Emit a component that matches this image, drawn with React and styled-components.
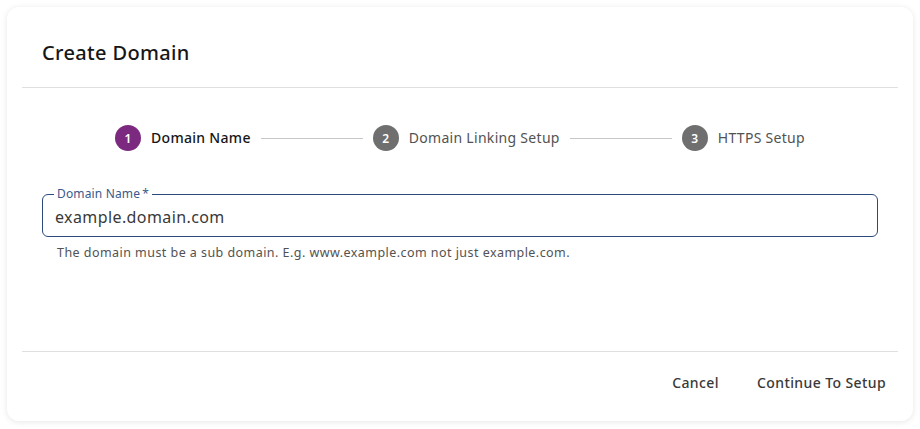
import styled, { createGlobalStyle } from 'styled-components';

const GlobalStyle = createGlobalStyle`
  * { box-sizing: border-box; }
  body {
    margin: 0;
    background: #ffffff;
    font-family: 'Noto Sans', 'Open Sans', sans-serif;
    color: #161616;
  }
`;

const steps = ['Domain Name', 'Domain Linking Setup', 'HTTPS Setup'];

export default function App() {
  const active = 0;
  return (
    <>
      <GlobalStyle />
      <Page>
        <Card>
          <Header>
            <Title>Create Domain</Title>
          </Header>
          <Body>
            <Stepper>
              {steps.map((label, i) => (
                <Step key={label}>
                  {i > 0 && <Connector />}
                  <StepCircle $active={i === active}>{i + 1}</StepCircle>
                  <StepLabel $active={i === active}>{label}</StepLabel>
                </Step>
              ))}
            </Stepper>
            <Field>
              <Legend>Domain Name{'\u2009'}*</Legend>
              <Input defaultValue="example.domain.com" />
            </Field>
            <Helper>The domain must be a sub domain. E.g. www.example.com not just example.com.</Helper>
          </Body>
          <Footer>
            <TextButton>Cancel</TextButton>
            <TextButton>Continue To Setup</TextButton>
          </Footer>
        </Card>
      </Page>
    </>
  );
}

const Page = styled.div`
  padding: 7px;
`;

const Card = styled.div`
  width: 906px;
  height: 414px;
  background: #fff;
  border-radius: 12px;
  box-shadow: 0 1px 6px rgba(0, 0, 0, 0.1);
  padding: 0 15px;
  display: flex;
  flex-direction: column;
`;

const Header = styled.div`
  height: 81px;
  display: flex;
  align-items: flex-end;
  padding: 0 20px 21px;
  border-bottom: 1px solid #e0e0e0;
`;

const Title = styled.h2`
  margin: 0;
  font-size: 20px;
  line-height: 26px;
  font-weight: 500;
  letter-spacing: 0.35px;
  color: #161616;
`;

const Body = styled.div`
  flex: 1;
  padding-top: 37px;
`;

const Stepper = styled.div`
  display: flex;
  justify-content: center;
  align-items: center;
`;

const Step = styled.div`
  display: flex;
  align-items: center;
`;

const Connector = styled.div`
  width: 102px;
  height: 1px;
  background: #c6c6c6;
  margin: 0 10px;
`;

const StepCircle = styled.div`
  width: 26px;
  height: 26px;
  border-radius: 50%;
  background: ${(p) => (p.$active ? '#7b2a7f' : '#6f6f6f')};
  color: #fff;
  font-size: 12px;
  font-weight: 600;
  display: flex;
  align-items: center;
  justify-content: center;
`;

const StepLabel = styled.span`
  margin-left: 10px;
  font-size: 14px;
  line-height: 20px;
  letter-spacing: 0.3px;
  font-weight: ${(p) => (p.$active ? 500 : 400)};
  color: ${(p) => (p.$active ? '#161616' : '#525252')};
`;

const Field = styled.fieldset`
  margin: 36px 20px 0;
  padding: 0 12px 4px;
  border: 1px solid #2c4a7e;
  border-radius: 6px;
`;

const Legend = styled.legend`
  padding: 0 3px;
  margin-left: -1px;
  font-size: 12px;
  line-height: 14px;
  letter-spacing: 0.15px;
  color: #3a5a8c;
`;

const Input = styled.input`
  display: block;
  width: 100%;
  height: 31px;
  border: none;
  outline: none;
  padding: 0;
  font-family: inherit;
  font-size: 16px;
  letter-spacing: 0.4px;
  color: #393939;
  background: transparent;
`;

const Helper = styled.p`
  margin: 8px 0 0 35px;
  font-size: 12.5px;
  line-height: 16px;
  letter-spacing: 0.45px;
  color: #525252;
`;

const Footer = styled.div`
  height: 70px;
  border-top: 1px solid #e0e0e0;
  display: flex;
  justify-content: flex-end;
  align-items: flex-start;
  padding-top: 12px;
  gap: 14px;
`;

const TextButton = styled.button`
  height: 36px;
  padding: 0 12px;
  border: none;
  background: transparent;
  font-family: inherit;
  font-size: 14px;
  font-weight: 500;
  letter-spacing: 0.4px;
  color: #393939;
  cursor: pointer;
`;
